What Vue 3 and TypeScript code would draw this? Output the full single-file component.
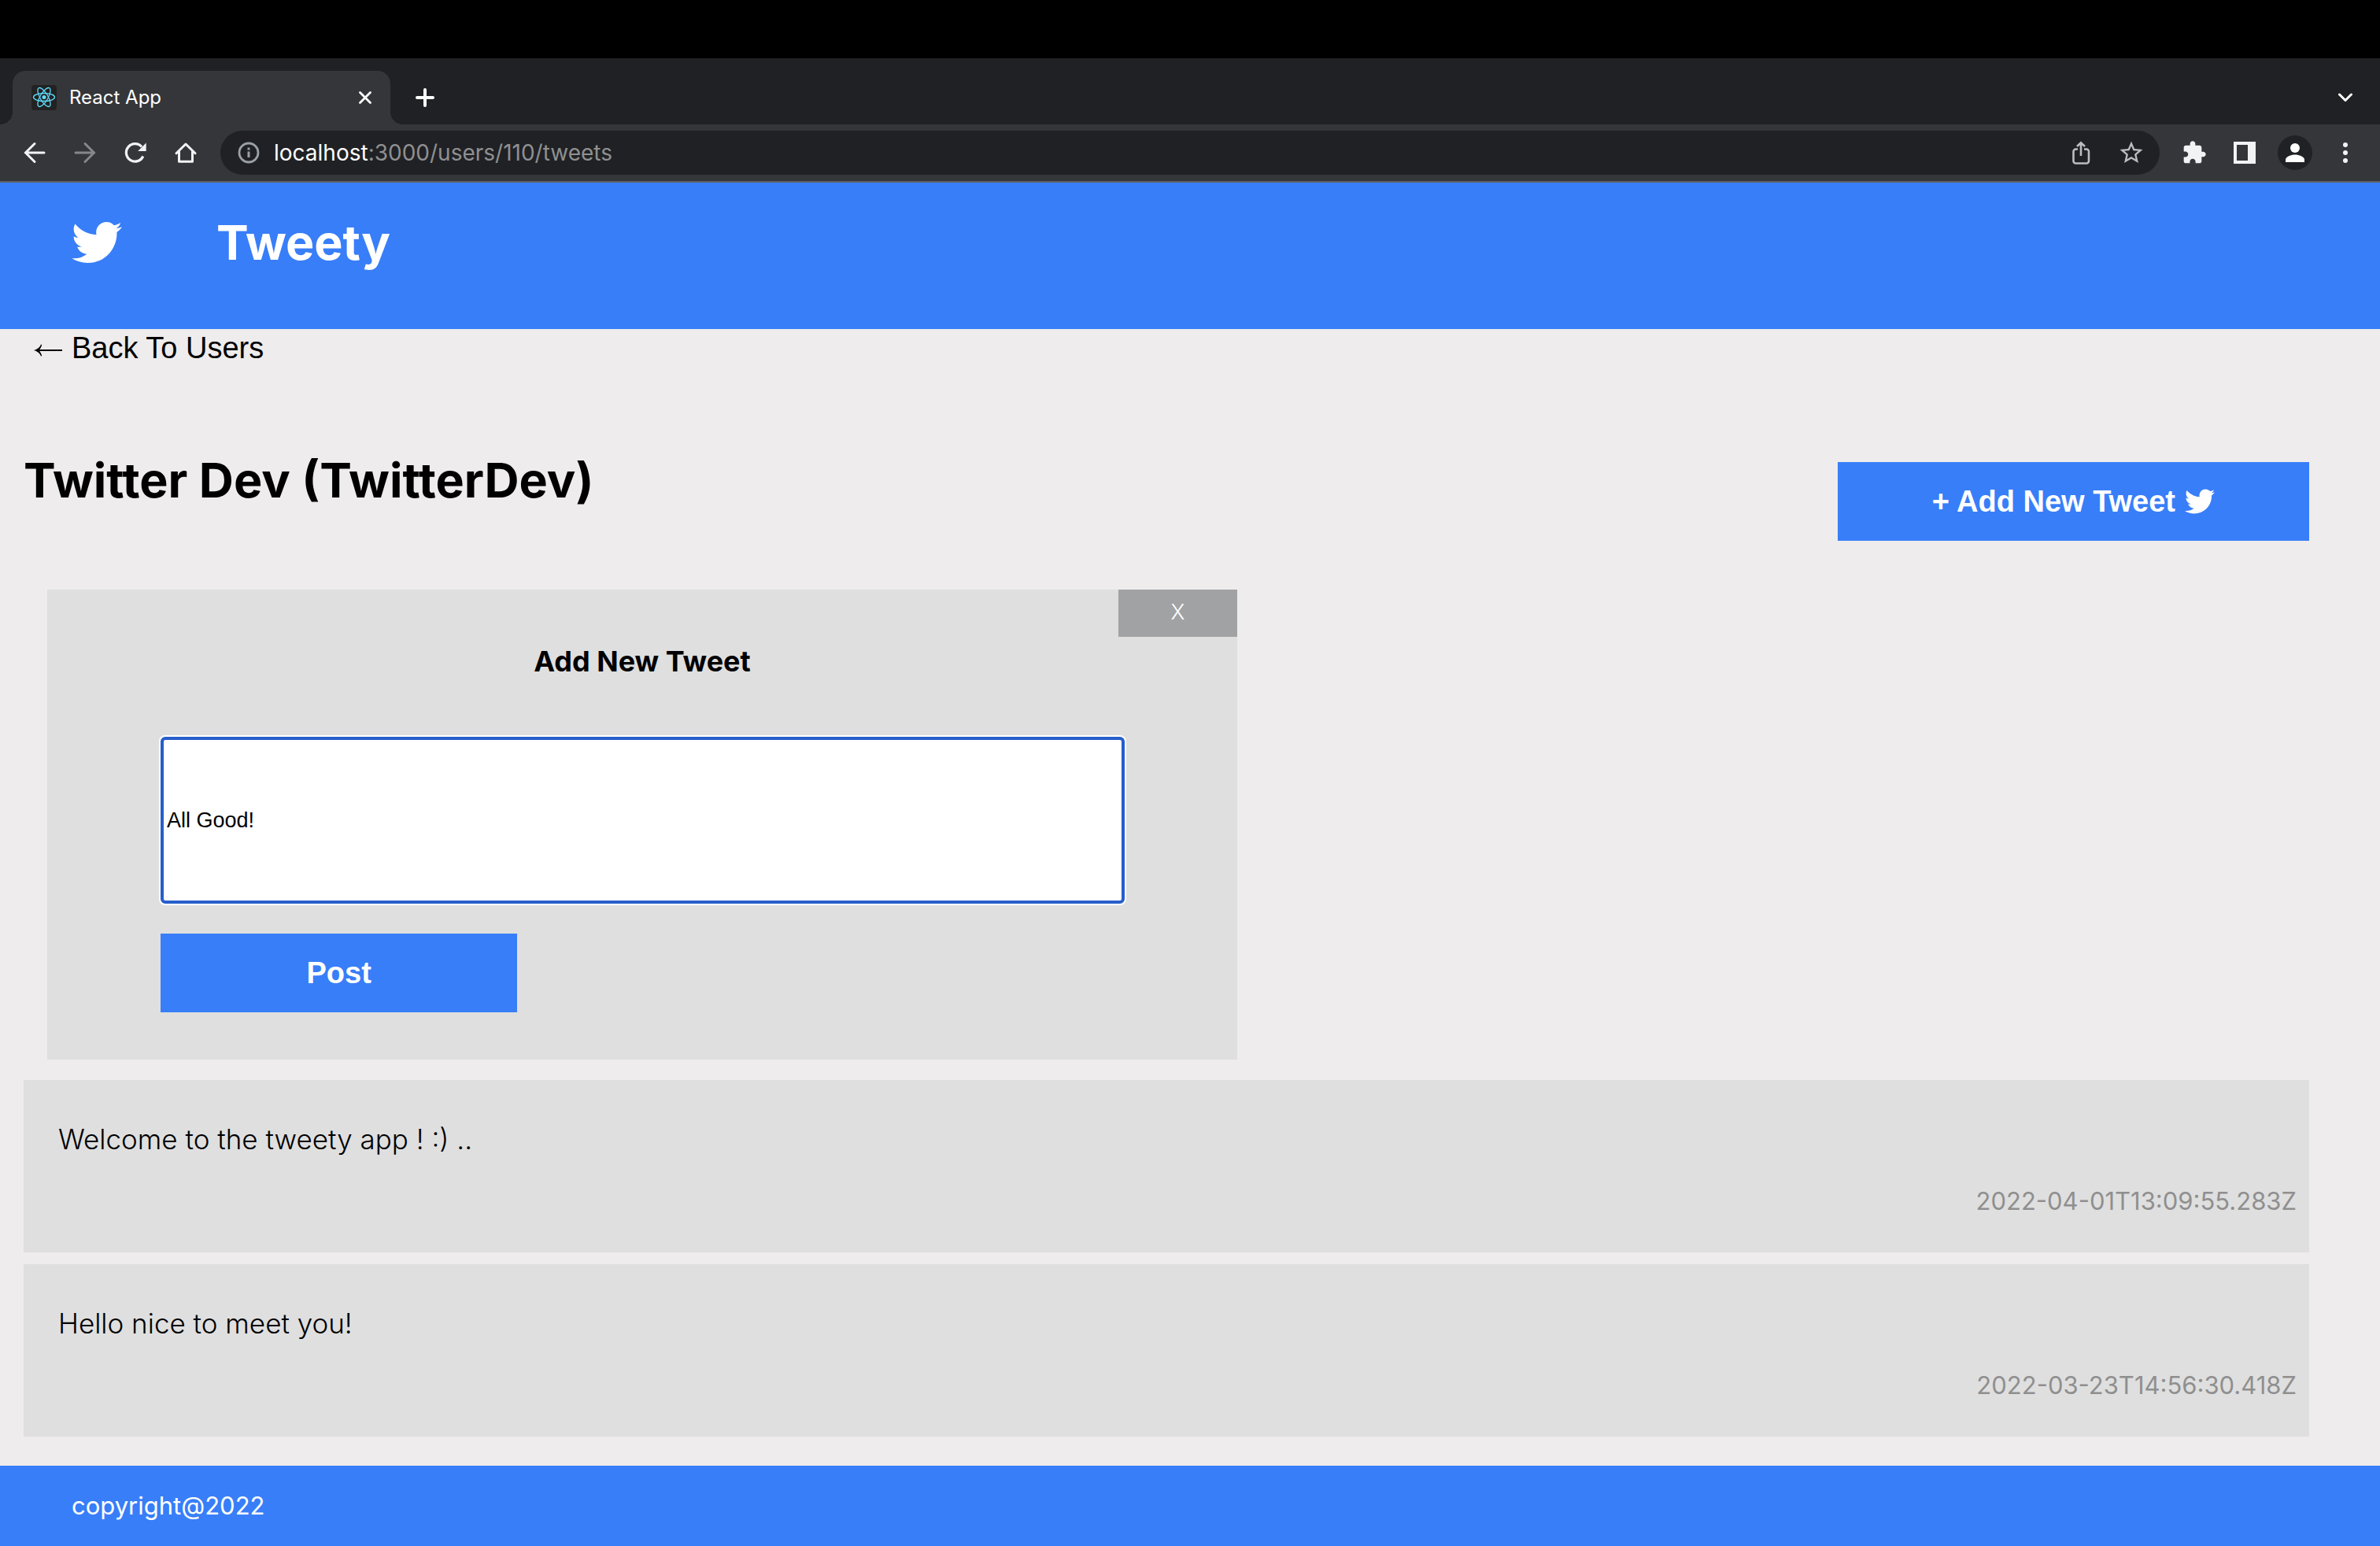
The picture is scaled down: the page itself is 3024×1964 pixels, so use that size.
<script setup lang="ts">
import { ref } from 'vue'

interface Tweet {
  id: number
  text: string
  createdAt: string
}

const birdPath =
  'M459.37 151.716c.325 4.548.325 9.097.325 13.645 0 138.72-105.583 298.558-298.558 298.558-59.452 0-114.68-17.219-161.137-47.106 8.447.974 16.568 1.299 25.34 1.299 49.055 0 94.213-16.568 130.274-44.832-46.132-.975-84.792-31.188-98.112-72.772 6.498.974 12.995 1.624 19.818 1.624 9.421 0 18.843-1.3 27.614-3.573-48.081-9.747-84.143-51.98-84.143-102.985v-1.299c13.969 7.797 30.214 12.67 47.431 13.319-28.264-18.843-46.781-51.005-46.781-87.391 0-19.492 5.197-37.36 14.294-52.954 51.655 63.675 129.3 105.258 216.365 109.807-1.624-7.797-2.599-15.918-2.599-24.04 0-57.828 46.782-104.934 104.934-104.934 30.213 0 57.502 12.67 76.67 33.137 23.715-4.548 46.456-13.32 66.599-25.34-7.798 24.366-24.366 44.833-46.132 57.827 21.117-2.273 41.584-8.122 60.426-16.243-14.292 20.791-32.161 39.308-52.628 54.253z'

const tweets = ref<Tweet[]>([
  { id: 1, text: 'Welcome to the tweety app ! :) ..', createdAt: '2022-04-01T13:09:55.283Z' },
  { id: 2, text: 'Hello nice to meet you!', createdAt: '2022-03-23T14:56:30.418Z' },
])
const draft = ref('All Good!')
const formOpen = ref(true)

function post(): void {
  const text = draft.value.trim()
  if (!text) return
  tweets.value.unshift({ id: Date.now(), text, createdAt: new Date().toISOString() })
  draft.value = ''
}
</script>

<template>
  <div class="screen">
    <div class="browser">
      <div class="tab-strip">
        <div class="tab">
          <svg class="favicon" viewBox="0 0 32 32" aria-hidden="true">
            <rect width="32" height="32" rx="4" fill="#222" />
            <g fill="none" stroke="#61dafb" stroke-width="1.3">
              <ellipse cx="16" cy="15.5" rx="13.5" ry="5" />
              <ellipse cx="16" cy="15.5" rx="13.5" ry="5" transform="rotate(60 16 15.5)" />
              <ellipse cx="16" cy="15.5" rx="13.5" ry="5" transform="rotate(120 16 15.5)" />
            </g>
            <circle cx="16" cy="15.5" r="2.5" fill="#61dafb" />
          </svg>
          <span class="tab-title">React App</span>
          <button class="icon-button" type="button" aria-label="Close tab">
            <svg width="16" height="16" viewBox="0 0 16 16"><path d="M1.5 1.5l13 13M14.5 1.5l-13 13" fill="none" stroke="#fff" stroke-width="2.8" stroke-linecap="round" /></svg>
          </button>
        </div>
        <button class="icon-button new-tab" type="button" aria-label="New tab">
          <svg width="24" height="24" viewBox="0 0 24 24"><path d="M12 2v20M2 12h20" fill="none" stroke="#fff" stroke-width="4" stroke-linecap="round" /></svg>
        </button>
        <button class="icon-button tab-search" type="button" aria-label="Search tabs">
          <svg width="18" height="12" viewBox="0 0 18 12"><path d="M1.5 2L9 9.5L16.5 2" fill="none" stroke="#fff" stroke-width="3" stroke-linecap="round" stroke-linejoin="round" /></svg>
        </button>
      </div>

      <div class="toolbar">
        <div class="nav-buttons">
          <button class="icon-button" type="button" aria-label="Back">
            <svg width="32" height="32" viewBox="0 0 32 32"><path d="M16 4.5L4.5 16L16 27.5M5 16h23" fill="none" stroke="#f1f3f4" stroke-width="3" stroke-linecap="round" /></svg>
          </button>
          <button class="icon-button" type="button" aria-label="Forward">
            <svg width="32" height="32" viewBox="0 0 32 32"><path d="M16 4.5L27.5 16L16 27.5M27 16H4" fill="none" stroke="#86878a" stroke-width="3" stroke-linecap="round" /></svg>
          </button>
          <button class="icon-button" type="button" aria-label="Reload">
            <svg width="32" height="32" viewBox="0 0 32 32"><path d="M25.8 20.5A11.2 11.2 0 1 1 24 8.5" fill="none" stroke="#f1f3f4" stroke-width="3.2" /><path d="M29.7 3.5v10.5H19.2z" fill="#f1f3f4" /></svg>
          </button>
          <button class="icon-button" type="button" aria-label="Home">
            <svg width="32" height="32" viewBox="0 0 32 32"><path d="M4 16.8L16 5L28 16.8M7.5 14.5V27.2H24.5V14.5" fill="none" stroke="#f1f3f4" stroke-width="3" stroke-linejoin="round" stroke-linecap="round" /></svg>
          </button>
        </div>
        <div class="omnibox">
          <svg width="32" height="32" viewBox="0 0 32 32" aria-hidden="true"><circle cx="16" cy="16" r="12" fill="none" stroke="#9aa0a6" stroke-width="2.8" /><path d="M16 14.5v7.5M16 9.5v3" stroke="#9aa0a6" stroke-width="3" /></svg>
          <div class="url"><span class="host">localhost</span>:3000/users/110/tweets</div>
          <button class="icon-button" type="button" aria-label="Share">
            <svg width="32" height="32" viewBox="0 0 32 32"><path d="M12 11.5H9.500a3 3 0 0 0-3 3V26.500a3 3 0 0 0 3 3H23a3 3 0 0 0 3-3V14.500a3 3 0 0 0-3-3H20M16 20V3.500M11 8L16 3.200L21 8" fill="none" stroke="#bcbdbe" stroke-width="2.6" /></svg>
          </button>
          <button class="icon-button" type="button" aria-label="Bookmark">
            <svg width="32" height="32" viewBox="1 1 22 22"><path fill="#bcbdbe" d="M22 9.24l-7.19-.62L12 2 9.19 8.63 2 9.24l5.46 4.73L5.82 21 12 17.27 18.18 21l-1.63-7.03L22 9.24zM12 15.4l-3.76 2.27 1-4.28-3.32-2.88 4.38-.38L12 6.1l1.71 4.04 4.38.38-3.32 2.88 1 4.28L12 15.4z" /></svg>
          </button>
        </div>
        <div class="actions">
          <button class="icon-button" type="button" aria-label="Extensions">
            <svg width="32" height="32" viewBox="0 0 24 24"><path fill="#f1f3f4" d="M20.5 11H19V7c0-1.1-.9-2-2-2h-4V3.5C13 2.12 11.88 1 10.5 1S8 2.12 8 3.5V5H4c-1.1 0-1.99.9-1.99 2v3.8H3.5c1.49 0 2.7 1.21 2.7 2.7s-1.21 2.7-2.7 2.7H2V20c0 1.1.9 2 2 2h3.8v-1.5c0-1.49 1.21-2.7 2.7-2.7 1.49 0 2.7 1.21 2.7 2.7V22H17c1.1 0 2-.9 2-2v-4h1.5c1.38 0 2.5-1.12 2.5-2.5S21.88 11 20.5 11z" /></svg>
          </button>
          <button class="icon-button" type="button" aria-label="Side panel">
            <svg width="28" height="28" viewBox="0 0 28 28"><path fill="#f1f3f4" fill-rule="evenodd" d="M0 0h28v28H0zM4 4v20h14V4z" /></svg>
          </button>
          <button class="icon-button" type="button" aria-label="Profile">
            <svg width="44" height="44" viewBox="0 0 44 44"><circle cx="22" cy="22" r="22" fill="#202124" /><circle cx="22" cy="16" r="6" fill="#fff" /><path d="M10 34v-3c0-4 7-6.5 12-6.5s12 2.5 12 6.5v3z" fill="#fff" /></svg>
          </button>
          <button class="icon-button" type="button" aria-label="Menu">
            <svg width="32" height="32" viewBox="0 0 32 32" fill="#f1f3f4"><circle cx="16" cy="6" r="3" /><circle cx="16" cy="16" r="3" /><circle cx="16" cy="26" r="3" /></svg>
          </button>
        </div>
      </div>
    </div>

    <header class="app-header">
      <svg width="64" height="64" viewBox="0 0 512 512" aria-hidden="true"><path fill="currentColor" :d="birdPath" /></svg>
      <span class="brand">Tweety</span>
    </header>

    <main class="content">
      <a class="back-link" href="#users">
        <svg width="36" height="24" viewBox="0 0 36 24" aria-hidden="true"><path d="M4 15h32" stroke="#000" stroke-width="2" /><path d="M9 7.5C8 11 4 14 0 15c4 1 8 4 9 7.5l1.2-.5C9.5 19 8 17 6.5 15C8 13 9.5 11 10.2 8z" /></svg>
        <span>Back To Users</span>
      </a>

      <div class="title-row">
        <h1>Twitter Dev (TwitterDev)</h1>
        <button class="primary add-button" type="button" @click="formOpen = true">
          <span>+ Add New Tweet</span>
          <svg width="38" height="38" viewBox="0 0 512 512" aria-hidden="true"><path fill="currentColor" :d="birdPath" /></svg>
        </button>
      </div>

      <form v-if="formOpen" class="tweet-form" @submit.prevent="post">
        <button class="close-button" type="button" aria-label="Close form" @click="formOpen = false">X</button>
        <h3><label for="tweet-text">Add New Tweet</label></h3>
        <div class="fields">
          <input id="tweet-text" v-model="draft" class="tweet-input" type="text" />
          <button class="primary post-button" type="submit">Post</button>
        </div>
      </form>

      <ul class="tweets">
        <li v-for="tweet in tweets" :key="tweet.id" class="tweet">
          <p>{{ tweet.text }}</p>
          <time :datetime="tweet.createdAt">{{ tweet.createdAt }}</time>
        </li>
      </ul>
    </main>

    <footer class="app-footer">copyright@2022</footer>
  </div>
</template>

<style>
body {
  margin: 0;
  background: #eeecec;
}
</style>

<style scoped>
.screen {
  display: flex;
  flex-direction: column;
  min-height: 100vh;
  font-family: Inter, "Liberation Sans", sans-serif;
  color: #000;
}
svg {
  display: block;
  flex: none;
}
button {
  margin: 0;
  padding: 0;
  border: 0;
  background: none;
  cursor: pointer;
}

/* Browser frame */
.browser {
  border-top: 74px solid #000;
  border-bottom: 2px solid #5f6063;
  background: #35363a;
}
.tab-strip {
  display: flex;
  align-items: center;
  padding: 16px 35px 0 16px;
  background: #202124;
}
.tab {
  position: relative;
  display: flex;
  align-items: center;
  box-sizing: border-box;
  width: 480px;
  height: 68px;
  padding: 0 24px;
  border-radius: 16px 16px 0 0;
  background: #35363a;
}
.tab::before,
.tab::after {
  content: "";
  position: absolute;
  bottom: 0;
  width: 16px;
  height: 16px;
}
.tab::before {
  right: 100%;
  background: radial-gradient(circle at 0 0, #202124 16px, #35363a 16px);
}
.tab::after {
  left: 100%;
  background: radial-gradient(circle at 100% 0, #202124 16px, #35363a 16px);
}
.favicon {
  width: 32px;
  height: 32px;
}
.tab-title {
  flex: 1;
  margin-left: 16px;
  font-size: 24px;
  line-height: 32px;
  color: #fff;
}
.new-tab {
  margin-left: 32px;
}
.tab-search {
  margin-left: auto;
}
.icon-button {
  display: flex;
  align-items: center;
  justify-content: center;
}
.toolbar {
  display: flex;
  align-items: center;
  gap: 28px;
  padding: 8px 22px 8px 28px;
}
.nav-buttons {
  display: flex;
  gap: 32px;
}
.omnibox {
  display: flex;
  flex: 1;
  align-items: center;
  gap: 32px;
  height: 56px;
  margin-right: -6px;
  padding: 0 20px;
  border-radius: 28px;
  box-sizing: border-box;
  background: #202124;
}
.url {
  flex: 1;
  margin-left: -16px;
  font-size: 28px;
  line-height: 36px;
  color: #8f9092;
}
.host {
  color: #fff;
}
.actions {
  display: flex;
  gap: 20px;
}
.actions .icon-button {
  width: 44px;
  height: 44px;
}

/* Application */
.app-header {
  display: flex;
  align-items: center;
  gap: 120px;
  padding: 40px 91px 74px;
  background: #387ef8;
  color: #fff;
}
.brand {
  font-size: 61px;
  font-weight: 700;
  line-height: 72px;
}
.content {
  flex: 1;
  padding: 0 90px 37px 30px;
}
.back-link {
  display: inline-flex;
  align-items: center;
  gap: 12px;
  margin-left: 13px;
  font-family: "Liberation Sans", Arial, sans-serif;
  font-size: 38px;
  line-height: 48px;
  color: #000;
  text-decoration: none;
  vertical-align: top;
}
.title-row {
  display: flex;
  align-items: flex-start;
  justify-content: space-between;
  margin-top: 108px;
}
h1 {
  margin: 0;
  font-size: 61px;
  font-weight: 700;
  line-height: 72px;
}
.primary {
  height: 100px;
  background: #387ef8;
  color: #fff;
  font-family: "Liberation Sans", Arial, sans-serif;
  font-size: 38px;
  font-weight: 700;
}
.add-button {
  display: flex;
  align-items: center;
  gap: 12px;
  margin-top: 13px;
  padding: 0 120px;
}
.tweet-form {
  display: flex;
  flex-direction: column;
  width: 50vw;
  margin: 62px 0 0 30px;
  background: #dfdfdf;
}
.close-button {
  align-self: flex-end;
  width: 10%;
  height: 60px;
  padding-bottom: 3px;
  background: #a1a2a4;
  color: #fff;
  font-family: Inter, sans-serif;
  font-size: 27px;
  font-weight: 300;
}
h3 {
  margin: 9px 0 0;
  font-size: 36px;
  font-weight: 700;
  line-height: 44px;
  text-align: center;
}
.fields {
  display: flex;
  flex-direction: column;
  gap: 38px;
  padding: 74px 143px 60px 144px;
}
.tweet-input {
  box-sizing: border-box;
  width: 100%;
  height: 212px;
  padding: 0 4px;
  border: 4px solid #275ecb;
  border-radius: 6px;
  outline: none;
  background: #fff;
  box-shadow: 0 0 0 2px #fff;
  color: #000;
  font-family: "Liberation Sans", Arial, sans-serif;
  font-size: 27px;
}
.post-button {
  width: 37%;
}
.tweets {
  display: flex;
  flex-direction: column;
  gap: 15px;
  margin: 26px 0 0;
  padding: 0;
  list-style: none;
}
.tweet {
  display: flex;
  flex-direction: column;
  gap: 37px;
  padding: 53px 16px 45px 44px;
  background: #dfdfdf;
}
.tweet p {
  margin: 0;
  font-size: 35px;
  font-weight: 300;
  line-height: 44px;
}
.tweet time {
  align-self: flex-end;
  font-size: 31px;
  line-height: 40px;
  color: #8f8f8f;
}
.app-footer {
  padding: 31px 91px;
  background: #387ef8;
  color: #fff;
  font-size: 31px;
  line-height: 40px;
}
</style>
